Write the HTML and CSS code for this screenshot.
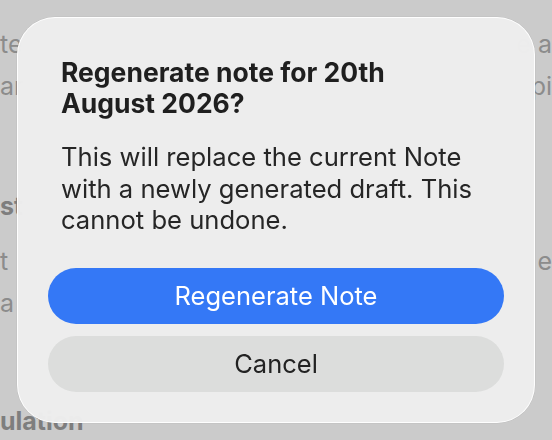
FILE: index.html
```html
<!DOCTYPE html>
<html lang="en">
<head>
<meta charset="utf-8">
<title>Regenerate note</title>
<link rel="stylesheet" href="styles.css">
</head>
<body>
<div class="backdrop">
  <div class="bg-para first">
    <div class="bg-line"><span>te</span><span>e a</span></div>
    <div class="bg-line"><span>ar</span><span>pi</span></div>
  </div>
  <div class="bg-heading">st</div>
  <div class="bg-para">
    <div class="bg-line"><span>t</span><span>e</span></div>
    <div class="bg-line"><span>a</span><span></span></div>
  </div>
  <div class="bg-heading last">ulation</div>
</div>

<div class="alert" role="alertdialog" aria-labelledby="alert-title">
  <div class="alert-text">
    <h1 class="alert-title" id="alert-title">Regenerate note for 20th August 2026?</h1>
    <p class="alert-message">This will replace the current Note with a newly generated draft. This cannot be undone.</p>
  </div>
  <div class="alert-buttons">
    <button class="btn btn-primary">Regenerate Note</button>
    <button class="btn btn-secondary">Cancel</button>
  </div>
</div>
</body>
</html>
```

FILE: styles.css
```css
html, body {
  margin: 0;
  padding: 0;
}

body {
  width: 552px;
  height: 440px;
  overflow: hidden;
  background: #cbcbcb;
  font-family: Inter, "Noto Sans", "Liberation Sans", sans-serif;
  position: relative;
}

.backdrop {
  color: #8c8c8c;
  font-size: 25px;
  line-height: 42px;
  padding-top: 23px;
}

.bg-line {
  display: flex;
  justify-content: space-between;
  height: 42px;
}

.bg-heading {
  font-weight: 700;
  color: #7e7e7e;
  margin-top: 78px;
  height: 42px;
}

.bg-heading + .bg-para {
  margin-top: 13px;
}

.bg-heading.last {
  margin-top: 76px;
}

.alert {
  position: absolute;
  left: 17px;
  top: 17px;
  width: 518px;
  height: 406px;
  box-sizing: border-box;
  border-radius: 38px;
  border: 1px solid rgba(255, 255, 255, 0.95);
  background: rgba(239, 239, 239, 0.94);
  backdrop-filter: blur(18px);
  box-shadow: 0 0 0 0.5px rgba(0, 0, 0, 0.06);
  padding: 39px 30px 30px;
  display: flex;
  flex-direction: column;
}

.alert-text {
  padding-left: 13px;
  width: 414px;
}

.alert-title {
  margin: 0 0 22px;
  font-size: 26.5px;
  line-height: 31px;
  font-weight: 700;
  color: #1f1f1f;
}

.alert-message {
  margin: 0;
  font-size: 25.6px;
  line-height: 31.5px;
  font-weight: 400;
  color: #262626;
}

.alert-buttons {
  margin-top: 32.3px;
  display: flex;
  flex-direction: column;
  gap: 12px;
}

.btn {
  height: 56px;
  border: none;
  border-radius: 28px;
  font-family: inherit;
  font-size: 25.5px;
  display: flex;
  align-items: center;
  justify-content: center;
  padding: 0;
}

.btn-primary {
  background: #3478f6;
  color: #ffffff;
}

.btn-secondary {
  background: #dcdddc;
  color: #222222;
}
```
